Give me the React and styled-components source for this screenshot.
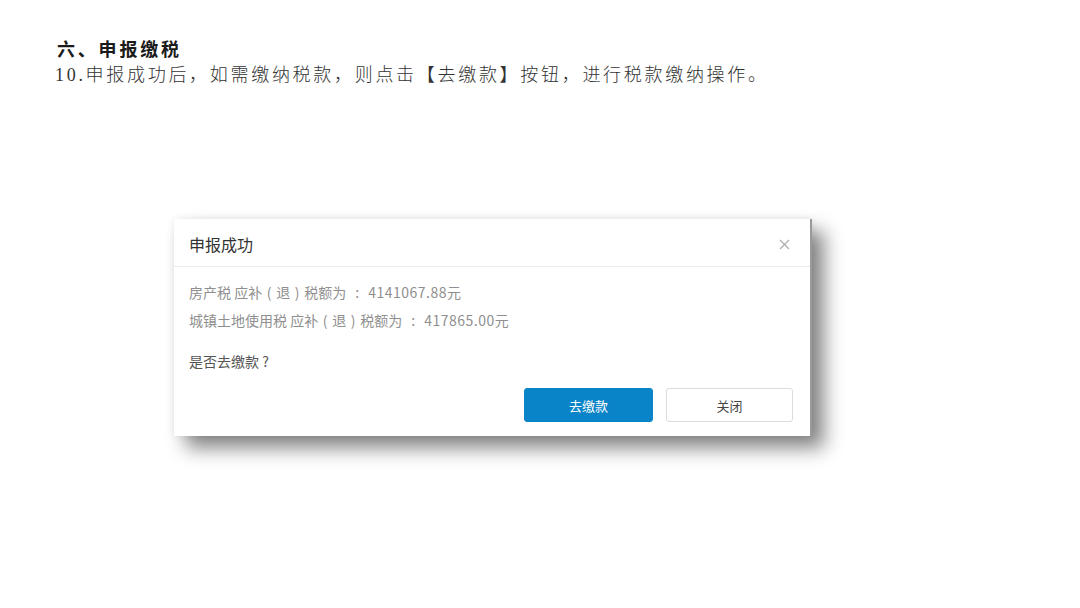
import React from 'react';
import styled, { createGlobalStyle } from 'styled-components';

const GlobalStyle = createGlobalStyle`
  html, body {
    margin: 0;
    padding: 0;
    background: #ffffff;
  }
  body {
    width: 1080px;
    height: 608px;
    overflow: hidden;
  }
`;

const Page = styled.div`
  width: 1080px;
  height: 608px;
  background: #fff;
  padding: 38px 0 0 55px;
  box-sizing: border-box;
`;

const Heading = styled.h2`
  margin: 0;
  font-family: "Liberation Serif", "Noto Sans CJK SC", serif;
  font-size: 18px;
  font-weight: 700;
  line-height: 25px;
  letter-spacing: 2.8px;
  color: #1a1a1a;
  padding-left: 2px;
`;

const Step = styled.p`
  margin: 0;
  font-family: "Liberation Serif", "Noto Sans CJK SC", serif;
  font-size: 18px;
  font-weight: 300;
  line-height: 25px;
  letter-spacing: 2.7px;
  color: #333;
`;

const Dialog = styled.div`
  margin: 131px 0 0 119px;
  width: 638px;
  background: #fff;
  border-right: 2px solid #9a9a9a;
  box-sizing: border-box;
  box-shadow: 12px 12px 18px rgba(0, 0, 0, 0.48), 0 0 8px rgba(0, 0, 0, 0.07);
  font-family: "Noto Sans CJK SC", "Liberation Sans", sans-serif;
`;

const Header = styled.div`
  height: 48px;
  display: flex;
  align-items: center;
  justify-content: space-between;
  padding: 3px 20px 0 15px;
  box-sizing: border-box;
  border-bottom: 1px solid #ebebf2;
`;

const Title = styled.span`
  font-size: 16px;
  color: #333;
`;

const Close = styled.span`
  display: flex;
  color: #b0b0b0;
`;

const Body = styled.div`
  padding: 11px 17px 14px 15px;
`;

const Line = styled.div`
  font-size: 14px;
  line-height: 28px;
  color: ${p => (p.$dark ? '#555' : '#8f8f8f')};
  margin-top: ${p => p.$gap || 0}px;
  white-space: nowrap;
`;

const Punct = styled.span`
  display: inline-block;
  width: ${p => p.$w || 14}px;
  text-align: center;
`;

const Amount = styled.span`
  letter-spacing: 0.5px;
`;

const Actions = styled.div`
  display: flex;
  justify-content: flex-end;
  gap: 13px;
  margin-top: 13px;
`;

const Button = styled.button`
  width: ${p => p.$w}px;
  height: 34px;
  border-radius: 3px;
  font-family: "Noto Sans CJK SC", "Liberation Sans", sans-serif;
  font-size: 13px;
  cursor: pointer;
  border: 1px solid ${p => (p.$primary ? '#0a84c8' : '#dcdcdc')};
  background: ${p => (p.$primary ? '#0a84c8' : '#fff')};
  color: ${p => (p.$primary ? '#fff' : '#444')};
`;

const TaxLine = ({ name, amount }) => (
  <Line>
    {name} 应补<Punct>(</Punct>退<Punct>)</Punct>税额为<Punct $w={22}>:</Punct><Amount>{amount}</Amount>元
  </Line>
);

const App = () => {
  return (
    <>
      <GlobalStyle />
      <Page>
        <Heading>六、申报缴税</Heading>
        <Step>10.申报成功后，如需缴纳税款，则点击【去缴款】按钮，进行税款缴纳操作。</Step>

        <Dialog>
          <Header>
            <Title>申报成功</Title>
            <Close>
              <svg width="11" height="11" viewBox="0 0 11 11">
                <path d="M1 1 L10 10 M10 1 L1 10" stroke="currentColor" strokeWidth="1.3" />
              </svg>
            </Close>
          </Header>
          <Body>
            <TaxLine name="房产税" amount="4141067.88" />
            <TaxLine name="城镇土地使用税" amount="417865.00" />
            <Line $dark $gap={13}>是否去缴款 ?</Line>
            <Actions>
              <Button $primary $w={129}>去缴款</Button>
              <Button $w={127}>关闭</Button>
            </Actions>
          </Body>
        </Dialog>
      </Page>
    </>
  );
};

export default App;
